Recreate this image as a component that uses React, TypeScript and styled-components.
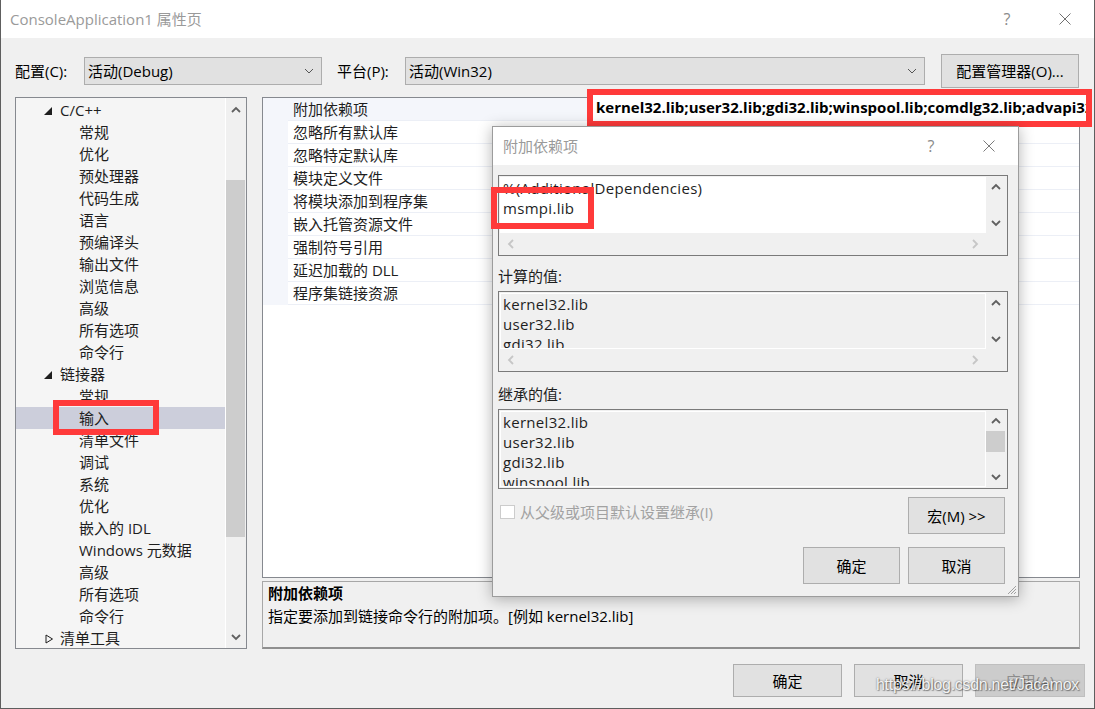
import React from "react";
import styled, { createGlobalStyle } from "styled-components";

const FONT = `"Open Sans", "Noto Sans CJK SC", sans-serif`;

const GlobalStyle = createGlobalStyle`
  html, body { margin: 0; padding: 0; background: #f0f0f0; }
  body { font-family: ${FONT}; font-size: 15px; color: #000; }
  * { box-sizing: border-box; }
`;

/* ---------- window chrome ---------- */
const Window = styled.div`
  position: relative;
  width: 1095px;
  height: 709px;
  background: #f0f0f0;
  border: 1px solid #5e5e5e;
  border-top: none;
  display: flex;
  flex-direction: column;
  overflow: hidden;
`;

const TitleBar = styled.div`
  height: 38px;
  flex-shrink: 0;
  display: flex;
  align-items: center;
  background: #ffffff;
  padding-left: ${(p: { $pad: number }) => p.$pad}px;
`;

const TitleText = styled.div`
  flex: 1;
  color: #9a9a9a;
  font-size: 15px;
  line-height: 20px;
  white-space: nowrap;
`;

const CaptionButton = styled.div`
  width: 58px;
  height: 38px;
  display: flex;
  align-items: center;
  justify-content: center;
  color: #8a8a8a;
  font-size: 16px;
`;

const Main = styled.div`
  padding: 16px 14px 0 14px;
  display: flex;
  flex-direction: column;
`;

/* ---------- configuration row ---------- */
const ConfigRow = styled.div`
  height: 34px;
  display: flex;
  align-items: center;
`;

const FieldLabel = styled.div<{ $w: number; $ml?: number }>`
  width: ${(p) => p.$w}px;
  margin-left: ${(p) => p.$ml ?? 0}px;
  flex-shrink: 0;
  line-height: 20px;
  white-space: nowrap;
`;

const Select = styled.div<{ $w: number }>`
  width: ${(p) => p.$w}px;
  height: 28px;
  flex-shrink: 0;
  border: 1px solid #adadad;
  background: #e1e1e1;
  display: flex;
  align-items: center;
  justify-content: space-between;
  padding: 0 7px 0 3px;
  line-height: 20px;
`;

const PushButton = styled.div<{ $w: number; $h: number; $disabled?: boolean; $ml?: number }>`
  width: ${(p) => p.$w}px;
  height: ${(p) => p.$h}px;
  margin-left: ${(p) => p.$ml ?? 0}px;
  flex-shrink: 0;
  border: 1px solid ${(p) => (p.$disabled ? "#bfbfbf" : "#adadad")};
  background: ${(p) => (p.$disabled ? "#cccccc" : "#e1e1e1")};
  color: ${(p) => (p.$disabled ? "#8d8d8d" : "#000")};
  display: flex;
  align-items: center;
  justify-content: center;
  line-height: 20px;
  white-space: nowrap;
`;

/* ---------- body ---------- */
const Body = styled.div`
  margin-top: 9px;
  height: 552px;
  display: flex;
  gap: 15px;
`;

const TreePanel = styled.div`
  width: 232px;
  height: 100%;
  border: 1px solid #86898f;
  background: #f5f5f5;
  display: flex;
`;

const TreeList = styled.div`
  flex: 1;
  padding-top: 1px;
  overflow: hidden;
  border-right: 1px solid #ffffff;
`;

const TreeRow = styled.div<{ $level: number; $selected?: boolean }>`
  height: 22px;
  display: flex;
  align-items: center;
  padding-left: ${(p) => (p.$level === 1 ? 28 : 63)}px;
  background: ${(p) => (p.$selected ? "#cccedb" : "transparent")};
  color: #1e1e1e;
  line-height: 22px;
  white-space: nowrap;
`;

const Toggle = styled.div`
  width: 16px;
  height: 22px;
  flex-shrink: 0;
  display: flex;
  align-items: center;
  padding-top: 1px;
`;

const VScroll = styled.div`
  width: 20px;
  flex-shrink: 0;
  display: flex;
  flex-direction: column;
  background: #f0f0f0;
`;

const ScrollArrow = styled.div<{ $h: number }>`
  height: ${(p) => p.$h}px;
  flex-shrink: 0;
  display: flex;
  align-items: center;
  justify-content: center;
`;

const ScrollTrack = styled.div`
  flex: 1;
  overflow: hidden;
`;

const Thumb = styled.div<{ $offset: number; $size: number }>`
  margin-top: ${(p) => p.$offset}px;
  height: ${(p) => p.$size}px;
  width: 19px;
  background: #cdcdcd;
`;

const HScroll = styled.div`
  grid-column: 1 / span 2;
  display: flex;
  align-items: center;
  justify-content: space-between;
  padding: 0 26px 0 6px;
  background: #f0f0f0;
`;

const RightColumn = styled.div`
  width: 818px;
  display: flex;
  flex-direction: column;
  gap: 3px;
`;

const PropGrid = styled.div`
  height: 481px;
  border: 1px solid #86898f;
  background: #ffffff;
  display: flex;
  flex-direction: column;
`;

const PropRow = styled.div`
  height: 23px;
  display: flex;
  flex-shrink: 0;
`;

const Gutter = styled.div`
  width: 25px;
  background: #f4f6fb;
  flex-shrink: 0;
`;

const NameCell = styled.div<{ $selected?: boolean }>`
  width: 299px;
  flex-shrink: 0;
  padding-left: 5px;
  line-height: 22px;
  color: #1e1e1e;
  border-bottom: 1px solid #eceff6;
  background: ${(p) => (p.$selected ? "#f4f6fb" : "#ffffff")};
  white-space: nowrap;
`;

const ValueCell = styled.div<{ $selected?: boolean }>`
  flex: 1;
  border-bottom: 1px solid #eceff6;
  border-left: 1px solid #eceff6;
  background: ${(p) => (p.$selected ? "#f4f6fb" : "#ffffff")};
`;

const DescPanel = styled.div`
  height: 68px;
  border: 1px solid #a7a7a7;
  border-bottom: 2px solid #8f8f8f;
  background: #f0f0f0;
  padding: 1px 5px 0;
`;

const DescTitle = styled.div`
  font-weight: 700;
  line-height: 20px;
`;

const DescText = styled.div`
  margin-top: 3px;
  line-height: 20px;
`;

const Footer = styled.div`
  margin-top: 15px;
  height: 33px;
  display: flex;
  justify-content: flex-end;
  gap: 12px;
  padding-right: 9px;
`;

/* ---------- dialog ---------- */
const Dialog = styled.div`
  position: absolute;
  left: 491px;
  top: 126px;
  width: 527px;
  height: 471px;
  border: 1px solid #9c9c9c;
  background: #f0f0f0;
  box-shadow: 0 2px 14px rgba(0, 0, 0, 0.3);
  display: flex;
  flex-direction: column;
`;

const DialogBody = styled.div`
  padding: 10px 10px 0 5px;
  display: flex;
  flex-direction: column;
`;

const EditBox = styled.div<{ $h: number; $hscroll?: boolean }>`
  height: ${(p) => p.$h}px;
  flex-shrink: 0;
  border: 1px solid #7a7a7a;
  padding: 1px;
  background: #f0f0f0;
  display: grid;
  grid-template-columns: 1fr 20px;
  grid-template-rows: ${(p) => (p.$hscroll ? "1fr 21px" : "1fr")};
`;

const TextArea = styled.div<{ $readOnly?: boolean }>`
  background: ${(p) => (p.$readOnly ? "#f0f0f0" : "#ffffff")};
  border: 1px solid #ffffff;
  padding: 0 2px;
  line-height: 20px;
  letter-spacing: 0.3px;
  color: #1e1e1e;
  overflow: hidden;
  white-space: nowrap;
`;

const DlgLabel = styled.div<{ $mt: number }>`
  margin: ${(p) => p.$mt}px 0 5px;
  line-height: 20px;
  color: #1e1e1e;
`;

const CheckRow = styled.div`
  margin-top: 8px;
  display: flex;
  justify-content: space-between;
  align-items: flex-start;
  padding-right: 3px;
`;

const CheckLabel = styled.div`
  margin-top: 5px;
  padding-left: 2px;
  display: flex;
  align-items: center;
  gap: 5px;
  color: #a2a2a2;
  line-height: 20px;
`;

const CheckBox = styled.div`
  width: 15px;
  height: 14px;
  border: 1px solid #cccccc;
  background: #ffffff;
`;

const DlgFooter = styled.div`
  margin-top: 13px;
  display: flex;
  justify-content: flex-end;
  gap: 8px;
  padding-right: 3px;
`;

const Grip = styled.div`
  position: absolute;
  right: 1px;
  bottom: 1px;
  width: 11px;
  height: 11px;
  display: flex;
`;

/* ---------- overlays ---------- */
const Annotation = styled.div<{ $x: number; $y: number; $w: number; $h: number }>`
  position: absolute;
  left: ${(p) => p.$x}px;
  top: ${(p) => p.$y}px;
  width: ${(p) => p.$w}px;
  height: ${(p) => p.$h}px;
  border: 6px solid #ff3a3a;
  pointer-events: none;
`;

const InplaceEditor = styled(Annotation)`
  background: #ffffff;
  padding-left: 3px;
  font-weight: 700;
  line-height: 25px;
  white-space: nowrap;
  overflow: hidden;
  color: #000;
`;

const Watermark = styled.div`
  position: absolute;
  left: 875px;
  top: 676px;
  font-family: "Liberation Sans", Arial, sans-serif;
  font-size: 16px;
  letter-spacing: -0.3px;
  color: rgba(255, 255, 255, 0.92);
  text-shadow: 0 0 2px rgba(0, 0, 0, 0.55), 1px 1px 1px rgba(0, 0, 0, 0.35);
  white-space: nowrap;
`;

/* ---------- icons ---------- */
type Dir = "up" | "down" | "left" | "right";
const chevronPts: Record<Dir, string> = {
  up: "1,7 5,3 9,7",
  down: "1,3 5,7 9,3",
  left: "7,1 3,5 7,9",
  right: "3,1 7,5 3,9",
};

const Chevron = ({ dir, color = "#606060", sw = 1.8, size = 10 }: { dir: Dir; color?: string; sw?: number; size?: number }) => (
  <svg width={size} height={size} viewBox="0 0 10 10">
    <polyline points={chevronPts[dir]} fill="none" stroke={color} strokeWidth={sw} />
  </svg>
);

const CloseIcon = ({ color = "#7a7a7a" }: { color?: string }) => (
  <svg width="12" height="12" viewBox="0 0 12 12">
    <path d="M0.5 0.5 L11.5 11.5 M11.5 0.5 L0.5 11.5" stroke={color} strokeWidth="1" fill="none" />
  </svg>
);

const ExpandedIcon = () => (
  <svg width="8" height="8" viewBox="0 0 8 8">
    <polygon points="8,0 8,8 0,8" fill="#1e1e1e" />
  </svg>
);

const CollapsedIcon = () => (
  <svg width="9" height="10" viewBox="0 0 9 10" style={{ marginLeft: 1 }}>
    <polygon points="1,1 7.5,5 1,9" fill="none" stroke="#1e1e1e" strokeWidth="1" />
  </svg>
);

const GripIcon = () => (
  <svg width="11" height="11" viewBox="0 0 11 11">
    <path d="M10 2 L2 10 M10 5 L5 10 M10 8 L8 10" stroke="#a0a0a0" strokeWidth="1" fill="none" />
  </svg>
);

/* ---------- data ---------- */
type TreeItem = { label: string; level: 1 | 2; toggle?: "open" | "closed"; selected?: boolean };
const lv2 = (labels: string[]): TreeItem[] => labels.map((label) => ({ label, level: 2 }));

const treeItems: TreeItem[] = [
  { label: "C/C++", level: 1, toggle: "open" },
  ...lv2(["常规", "优化", "预处理器", "代码生成", "语言", "预编译头", "输出文件", "浏览信息", "高级", "所有选项", "命令行"]),
  { label: "链接器", level: 1, toggle: "open" },
  { label: "常规", level: 2 },
  { label: "输入", level: 2, selected: true },
  ...lv2(["清单文件", "调试", "系统", "优化", "嵌入的 IDL", "Windows 元数据", "高级", "所有选项", "命令行"]),
  { label: "清单工具", level: 1, toggle: "closed" },
];

const propNames = [
  "附加依赖项",
  "忽略所有默认库",
  "忽略特定默认库",
  "模块定义文件",
  "将模块添加到程序集",
  "嵌入托管资源文件",
  "强制符号引用",
  "延迟加载的 DLL",
  "程序集链接资源",
];

const VScrollBar = ({ arrow, thumb }: { arrow: number; thumb?: { offset: number; size: number } }) => (
  <VScroll>
    <ScrollArrow $h={arrow}>
      <Chevron dir="up" />
    </ScrollArrow>
    <ScrollTrack>{thumb && <Thumb $offset={thumb.offset} $size={thumb.size} />}</ScrollTrack>
    <ScrollArrow $h={arrow}>
      <Chevron dir="down" />
    </ScrollArrow>
  </VScroll>
);

const DisabledHScroll = () => (
  <HScroll>
    <Chevron dir="left" color="#c6c6c6" />
    <Chevron dir="right" color="#c6c6c6" />
  </HScroll>
);

export default function App() {
  return (
    <>
      <GlobalStyle />
      <Window>
        <TitleBar $pad={9}>
          <TitleText>ConsoleApplication1 属性页</TitleText>
          <CaptionButton>?</CaptionButton>
          <CaptionButton>
            <CloseIcon color="#707070" />
          </CaptionButton>
        </TitleBar>

        <Main>
          <ConfigRow>
            <FieldLabel $w={69}>配置(C):</FieldLabel>
            <Select $w={238}>
              <span>活动(Debug)</span>
              <Chevron dir="down" color="#555" sw={1} />
            </Select>
            <FieldLabel $w={68} $ml={15}>
              平台(P):
            </FieldLabel>
            <Select $w={520}>
              <span>活动(Win32)</span>
              <Chevron dir="down" color="#555" sw={1} />
            </Select>
            <PushButton $w={138} $h={34} $ml={16}>
              配置管理器(O)...
            </PushButton>
          </ConfigRow>

          <Body>
            <TreePanel>
              <TreeList>
                {treeItems.map((it, i) => (
                  <TreeRow key={i} $level={it.level} $selected={it.selected}>
                    {it.toggle && <Toggle>{it.toggle === "open" ? <ExpandedIcon /> : <CollapsedIcon />}</Toggle>}
                    {it.label}
                  </TreeRow>
                ))}
              </TreeList>
              <VScrollBar arrow={23} thumb={{ offset: 59, size: 357 }} />
            </TreePanel>

            <RightColumn>
              <PropGrid>
                {propNames.map((n, i) => (
                  <PropRow key={n}>
                    <Gutter />
                    <NameCell $selected={i === 0}>{n}</NameCell>
                    <ValueCell $selected={i === 0} />
                  </PropRow>
                ))}
              </PropGrid>
              <DescPanel>
                <DescTitle>附加依赖项</DescTitle>
                <DescText>指定要添加到链接命令行的附加项。[例如 kernel32.lib]</DescText>
              </DescPanel>
            </RightColumn>
          </Body>
        </Main>

        <Footer>
          <PushButton $w={109} $h={33}>确定</PushButton>
          <PushButton $w={109} $h={33}>取消</PushButton>
          <PushButton $w={110} $h={33} $disabled>
            应用(A)
          </PushButton>
        </Footer>

        <InplaceEditor $x={586} $y={89} $w={505} $h={38}>
          kernel32.lib;user32.lib;gdi32.lib;winspool.lib;comdlg32.lib;advapi32.lib;shell32.lib
        </InplaceEditor>

        <Dialog>
          <TitleBar $pad={10}>
            <TitleText>附加依赖项</TitleText>
            <CaptionButton>?</CaptionButton>
            <CaptionButton>
              <CloseIcon />
            </CaptionButton>
          </TitleBar>
          <DialogBody>
            <EditBox $h={81} $hscroll>
              <TextArea>
                <div>%(AdditionalDependencies)</div>
                <div>msmpi.lib</div>
              </TextArea>
              <VScrollBar arrow={20} />
              <DisabledHScroll />
            </EditBox>

            <DlgLabel $mt={10}>计算的值:</DlgLabel>
            <EditBox $h={81} $hscroll>
              <TextArea $readOnly>
                <div>kernel32.lib</div>
                <div>user32.lib</div>
                <div>gdi32.lib</div>
              </TextArea>
              <VScrollBar arrow={20} />
              <DisabledHScroll />
            </EditBox>

            <DlgLabel $mt={12}>继承的值:</DlgLabel>
            <EditBox $h={80}>
              <TextArea $readOnly>
                <div>kernel32.lib</div>
                <div>user32.lib</div>
                <div>gdi32.lib</div>
                <div>winspool.lib</div>
              </TextArea>
              <VScrollBar arrow={20} thumb={{ offset: 0, size: 21 }} />
            </EditBox>

            <CheckRow>
              <CheckLabel>
                <CheckBox />
                从父级或项目默认设置继承(I)
              </CheckLabel>
              <PushButton $w={97} $h={37}>宏(M) &gt;&gt;</PushButton>
            </CheckRow>

            <DlgFooter>
              <PushButton $w={97} $h={37}>确定</PushButton>
              <PushButton $w={97} $h={37}>取消</PushButton>
            </DlgFooter>
          </DialogBody>
          <Grip>
            <GripIcon />
          </Grip>
        </Dialog>

        <Annotation $x={52} $y={400} $w={106} $h={35} />
        <Annotation $x={490} $y={187} $w={103} $h={42} />

        <Watermark>https://blog.csdn.net/Jacamox</Watermark>
      </Window>
    </>
  );
}
